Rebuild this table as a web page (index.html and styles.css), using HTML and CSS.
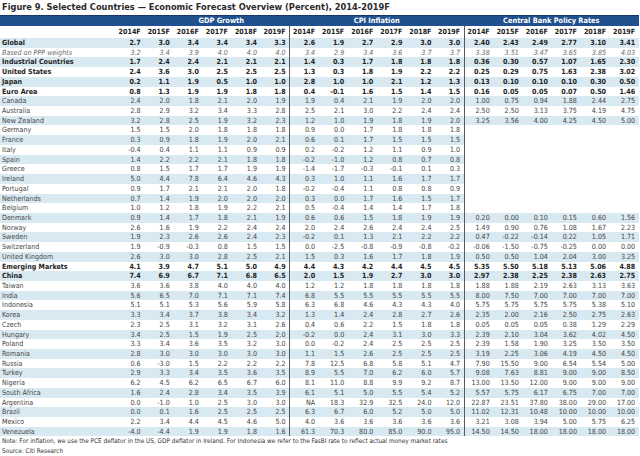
FILE: index.html
```html
<!DOCTYPE html>
<html>
<head>
<meta charset="utf-8">
<link rel="stylesheet" href="styles.css">
</head>
<body>
<div class="title">Figure 9. Selected Countries — Economic Forecast Overview (Percent), 2014-2019F</div>
<table class="fc">
<colgroup><col class="lab"><col span="18" class="num"></colgroup>
<thead>
<tr class="band"><th></th><th colspan="6" class="gdp">GDP Growth</th><th colspan="6">CPI Inflation</th><th colspan="6">Central Bank Policy Rates</th></tr>
<tr class="years"><th></th><td>2014F</td><td>2015F</td><td>2016F</td><td>2017F</td><td>2018F</td><td>2019F</td><td>2014F</td><td>2015F</td><td>2016F</td><td>2017F</td><td>2018F</td><td>2019F</td><td>2014F</td><td>2015F</td><td>2016F</td><td>2017F</td><td>2018F</td><td>2019F</td></tr>
</thead>
<tbody>
<tr class="s b"><th>Global</th><td>2.7</td><td>3.0</td><td>3.4</td><td>3.4</td><td>3.4</td><td>3.3</td><td>2.6</td><td>1.9</td><td>2.7</td><td>2.9</td><td>3.0</td><td>3.0</td><td>2.40</td><td>2.43</td><td>2.49</td><td>2.77</td><td>3.10</td><td>3.41</td></tr>
<tr class="i"><th>Based on PPP weights</th><td>3.2</td><td>3.4</td><td>3.9</td><td>4.0</td><td>4.0</td><td>4.0</td><td>3.4</td><td>2.9</td><td>3.4</td><td>3.6</td><td>3.7</td><td>3.7</td><td>3.38</td><td>3.51</td><td>3.47</td><td>3.65</td><td>3.85</td><td>4.03</td></tr>
<tr class="s b"><th>Industrial Countries</th><td>1.7</td><td>2.4</td><td>2.4</td><td>2.1</td><td>2.1</td><td>2.1</td><td>1.4</td><td>0.3</td><td>1.7</td><td>1.8</td><td>1.8</td><td>1.8</td><td>0.36</td><td>0.30</td><td>0.57</td><td>1.07</td><td>1.65</td><td>2.30</td></tr>
<tr class="b"><th>United States</th><td>2.4</td><td>3.6</td><td>3.0</td><td>2.5</td><td>2.5</td><td>2.5</td><td>1.3</td><td>0.3</td><td>1.8</td><td>1.9</td><td>2.2</td><td>2.2</td><td>0.25</td><td>0.29</td><td>0.75</td><td>1.63</td><td>2.38</td><td>3.02</td></tr>
<tr class="s b"><th>Japan</th><td>0.2</td><td>1.1</td><td>1.9</td><td>0.5</td><td>1.0</td><td>1.0</td><td>2.8</td><td>1.0</td><td>1.0</td><td>2.1</td><td>1.2</td><td>1.3</td><td>0.13</td><td>0.10</td><td>0.10</td><td>0.10</td><td>0.30</td><td>0.50</td></tr>
<tr class="b"><th>Euro Area</th><td>0.8</td><td>1.3</td><td>1.9</td><td>1.9</td><td>1.8</td><td>1.8</td><td>0.4</td><td>-0.1</td><td>1.6</td><td>1.5</td><td>1.4</td><td>1.5</td><td>0.16</td><td>0.05</td><td>0.05</td><td>0.07</td><td>0.50</td><td>1.46</td></tr>
<tr class="s"><th>Canada</th><td>2.4</td><td>2.0</td><td>1.8</td><td>2.1</td><td>2.0</td><td>1.9</td><td>1.9</td><td>0.4</td><td>2.1</td><td>1.9</td><td>2.0</td><td>2.0</td><td>1.00</td><td>0.75</td><td>0.94</td><td>1.88</td><td>2.44</td><td>2.75</td></tr>
<tr><th>Australia</th><td>2.8</td><td>2.9</td><td>3.2</td><td>3.4</td><td>3.3</td><td>2.8</td><td>2.5</td><td>2.1</td><td>3.0</td><td>2.2</td><td>2.4</td><td>2.4</td><td>2.50</td><td>2.50</td><td>3.13</td><td>3.75</td><td>4.19</td><td>4.75</td></tr>
<tr class="s"><th>New Zealand</th><td>3.2</td><td>2.8</td><td>2.5</td><td>1.9</td><td>3.2</td><td>2.3</td><td>1.2</td><td>1.0</td><td>1.9</td><td>1.8</td><td>1.9</td><td>2.0</td><td>3.25</td><td>3.56</td><td>4.00</td><td>4.25</td><td>4.50</td><td>5.00</td></tr>
<tr><th>Germany</th><td>1.5</td><td>1.5</td><td>2.0</td><td>1.8</td><td>1.8</td><td>1.8</td><td>0.9</td><td>0.0</td><td>1.7</td><td>1.8</td><td>1.8</td><td>1.8</td><td colspan="6" class="blank"></td></tr>
<tr class="s"><th>France</th><td>0.3</td><td>0.9</td><td>1.8</td><td>1.9</td><td>2.0</td><td>2.1</td><td>0.6</td><td>0.1</td><td>1.7</td><td>1.5</td><td>1.5</td><td>1.5</td><td colspan="6" class="blank"></td></tr>
<tr><th>Italy</th><td>-0.4</td><td>0.4</td><td>1.1</td><td>1.1</td><td>0.9</td><td>0.9</td><td>0.2</td><td>-0.2</td><td>1.2</td><td>1.1</td><td>0.9</td><td>1.0</td><td colspan="6" class="blank"></td></tr>
<tr class="s"><th>Spain</th><td>1.4</td><td>2.2</td><td>2.2</td><td>2.1</td><td>1.8</td><td>1.8</td><td>-0.2</td><td>-1.0</td><td>1.2</td><td>0.8</td><td>0.7</td><td>0.8</td><td colspan="6" class="blank"></td></tr>
<tr><th>Greece</th><td>0.8</td><td>1.5</td><td>1.7</td><td>1.7</td><td>1.9</td><td>1.9</td><td>-1.4</td><td>-1.7</td><td>-0.3</td><td>-0.1</td><td>0.1</td><td>0.3</td><td colspan="6" class="blank"></td></tr>
<tr class="s"><th>Ireland</th><td>5.0</td><td>4.4</td><td>7.8</td><td>6.4</td><td>4.6</td><td>4.3</td><td>0.3</td><td>1.0</td><td>1.1</td><td>1.6</td><td>1.7</td><td>1.7</td><td colspan="6" class="blank"></td></tr>
<tr><th>Portugal</th><td>0.9</td><td>1.7</td><td>2.1</td><td>2.1</td><td>2.0</td><td>1.8</td><td>-0.2</td><td>-0.4</td><td>1.1</td><td>0.8</td><td>0.8</td><td>0.9</td><td colspan="6" class="blank"></td></tr>
<tr class="s"><th>Netherlands</th><td>0.7</td><td>1.4</td><td>1.9</td><td>2.0</td><td>2.0</td><td>2.0</td><td>0.3</td><td>0.0</td><td>1.7</td><td>1.6</td><td>1.5</td><td>1.7</td><td colspan="6" class="blank"></td></tr>
<tr><th>Belgium</th><td>1.0</td><td>1.2</td><td>1.8</td><td>1.9</td><td>2.2</td><td>2.1</td><td>0.5</td><td>-0.4</td><td>1.4</td><td>1.4</td><td>1.7</td><td>1.8</td><td colspan="6" class="blank"></td></tr>
<tr class="s"><th>Denmark</th><td>0.9</td><td>1.4</td><td>1.7</td><td>1.8</td><td>2.1</td><td>1.9</td><td>0.6</td><td>0.6</td><td>1.5</td><td>1.8</td><td>1.9</td><td>1.9</td><td>0.20</td><td>0.00</td><td>0.10</td><td>0.15</td><td>0.60</td><td>1.56</td></tr>
<tr><th>Norway</th><td>2.6</td><td>1.6</td><td>1.9</td><td>2.2</td><td>2.4</td><td>2.4</td><td>2.0</td><td>2.4</td><td>2.6</td><td>2.4</td><td>2.4</td><td>2.5</td><td>1.49</td><td>0.90</td><td>0.76</td><td>1.08</td><td>1.67</td><td>2.23</td></tr>
<tr class="s"><th>Sweden</th><td>1.9</td><td>2.3</td><td>2.6</td><td>2.6</td><td>2.4</td><td>2.3</td><td>-0.2</td><td>0.1</td><td>1.3</td><td>2.1</td><td>2.2</td><td>2.2</td><td>0.47</td><td>-0.22</td><td>-0.14</td><td>0.22</td><td>1.05</td><td>1.71</td></tr>
<tr><th>Switzerland</th><td>1.9</td><td>-0.9</td><td>-0.3</td><td>0.8</td><td>1.5</td><td>1.5</td><td>0.0</td><td>-2.5</td><td>-0.8</td><td>-0.9</td><td>-0.8</td><td>-0.2</td><td>-0.06</td><td>-1.50</td><td>-0.75</td><td>-0.25</td><td>0.00</td><td>0.00</td></tr>
<tr class="s"><th>United Kingdom</th><td>2.6</td><td>3.0</td><td>3.0</td><td>2.8</td><td>2.5</td><td>2.1</td><td>1.5</td><td>0.3</td><td>1.6</td><td>1.7</td><td>1.8</td><td>1.9</td><td>0.50</td><td>0.50</td><td>1.04</td><td>2.04</td><td>3.00</td><td>3.25</td></tr>
<tr class="b"><th>Emerging Markets</th><td>4.1</td><td>3.9</td><td>4.7</td><td>5.1</td><td>5.0</td><td>4.9</td><td>4.4</td><td>4.3</td><td>4.2</td><td>4.4</td><td>4.5</td><td>4.5</td><td>5.35</td><td>5.50</td><td>5.18</td><td>5.13</td><td>5.06</td><td>4.88</td></tr>
<tr class="s b"><th>China</th><td>7.4</td><td>6.9</td><td>6.7</td><td>7.1</td><td>6.8</td><td>6.5</td><td>2.0</td><td>1.5</td><td>1.9</td><td>2.7</td><td>3.0</td><td>3.0</td><td>2.97</td><td>2.38</td><td>2.25</td><td>2.38</td><td>2.63</td><td>2.75</td></tr>
<tr><th>Taiwan</th><td>3.6</td><td>3.6</td><td>3.8</td><td>4.0</td><td>4.0</td><td>4.0</td><td>1.2</td><td>1.2</td><td>1.8</td><td>1.8</td><td>1.8</td><td>1.8</td><td>1.88</td><td>1.88</td><td>2.19</td><td>2.63</td><td>3.13</td><td>3.63</td></tr>
<tr class="s"><th>India</th><td>5.6</td><td>6.5</td><td>7.0</td><td>7.1</td><td>7.1</td><td>7.4</td><td>6.8</td><td>5.5</td><td>5.5</td><td>5.5</td><td>5.5</td><td>5.5</td><td>8.00</td><td>7.50</td><td>7.00</td><td>7.00</td><td>7.00</td><td>7.00</td></tr>
<tr><th>Indonesia</th><td>5.1</td><td>5.1</td><td>5.3</td><td>5.6</td><td>5.9</td><td>5.8</td><td>6.3</td><td>6.8</td><td>4.6</td><td>4.3</td><td>4.3</td><td>4.0</td><td>5.75</td><td>5.75</td><td>5.75</td><td>5.75</td><td>5.38</td><td>5.10</td></tr>
<tr class="s"><th>Korea</th><td>3.3</td><td>3.4</td><td>3.7</td><td>3.8</td><td>3.4</td><td>3.2</td><td>1.3</td><td>1.4</td><td>2.4</td><td>2.8</td><td>2.7</td><td>2.6</td><td>2.35</td><td>2.00</td><td>2.16</td><td>2.50</td><td>2.75</td><td>2.63</td></tr>
<tr><th>Czech</th><td>2.3</td><td>2.5</td><td>3.1</td><td>3.2</td><td>3.1</td><td>2.6</td><td>0.4</td><td>0.6</td><td>2.2</td><td>1.5</td><td>1.8</td><td>1.8</td><td>0.05</td><td>0.05</td><td>0.05</td><td>0.38</td><td>1.29</td><td>2.29</td></tr>
<tr class="s"><th>Hungary</th><td>3.4</td><td>2.5</td><td>1.5</td><td>1.9</td><td>2.5</td><td>2.0</td><td>-0.2</td><td>0.0</td><td>2.4</td><td>3.1</td><td>3.0</td><td>3.3</td><td>2.39</td><td>2.10</td><td>3.04</td><td>3.62</td><td>4.02</td><td>4.50</td></tr>
<tr><th>Poland</th><td>3.3</td><td>3.4</td><td>3.6</td><td>3.5</td><td>3.2</td><td>3.0</td><td>0.0</td><td>-0.2</td><td>2.4</td><td>2.5</td><td>2.5</td><td>2.5</td><td>2.39</td><td>1.58</td><td>1.90</td><td>3.25</td><td>3.50</td><td>3.50</td></tr>
<tr class="s"><th>Romania</th><td>2.8</td><td>3.0</td><td>3.0</td><td>3.0</td><td>3.0</td><td>3.0</td><td>1.1</td><td>1.5</td><td>2.6</td><td>2.5</td><td>2.5</td><td>2.5</td><td>3.19</td><td>2.25</td><td>3.06</td><td>4.19</td><td>4.50</td><td>4.50</td></tr>
<tr><th>Russia</th><td>0.6</td><td>-3.0</td><td>1.5</td><td>2.2</td><td>2.2</td><td>2.2</td><td>7.8</td><td>12.5</td><td>6.8</td><td>5.8</td><td>5.1</td><td>4.7</td><td>7.90</td><td>15.50</td><td>9.00</td><td>6.54</td><td>5.54</td><td>5.00</td></tr>
<tr class="s"><th>Turkey</th><td>2.9</td><td>3.3</td><td>3.4</td><td>3.5</td><td>3.6</td><td>3.5</td><td>8.9</td><td>5.5</td><td>7.0</td><td>6.2</td><td>6.0</td><td>5.7</td><td>9.08</td><td>7.63</td><td>8.81</td><td>9.00</td><td>9.00</td><td>8.50</td></tr>
<tr><th>Nigeria</th><td>6.2</td><td>4.5</td><td>6.2</td><td>6.5</td><td>6.7</td><td>6.0</td><td>8.1</td><td>11.0</td><td>8.8</td><td>9.9</td><td>9.2</td><td>8.7</td><td>13.00</td><td>13.50</td><td>12.00</td><td>9.00</td><td>9.00</td><td>9.00</td></tr>
<tr class="s"><th>South Africa</th><td>1.6</td><td>2.4</td><td>2.8</td><td>3.4</td><td>3.5</td><td>3.9</td><td>6.1</td><td>5.1</td><td>5.0</td><td>5.5</td><td>5.4</td><td>5.2</td><td>5.57</td><td>5.75</td><td>6.17</td><td>6.75</td><td>7.00</td><td>7.00</td></tr>
<tr><th>Argentina</th><td>0.0</td><td>-1.0</td><td>1.0</td><td>2.5</td><td>3.0</td><td>3.0</td><td>NA</td><td>18.3</td><td>32.9</td><td>32.5</td><td>24.0</td><td>12.0</td><td>22.87</td><td>23.51</td><td>37.80</td><td>38.00</td><td>29.00</td><td>17.00</td></tr>
<tr class="s"><th>Brazil</th><td>0.0</td><td>0.1</td><td>1.6</td><td>2.5</td><td>2.5</td><td>2.5</td><td>6.3</td><td>6.7</td><td>6.0</td><td>5.2</td><td>5.0</td><td>5.0</td><td>11.02</td><td>12.31</td><td>10.48</td><td>10.00</td><td>10.00</td><td>10.00</td></tr>
<tr><th>Mexico</th><td>2.2</td><td>3.4</td><td>4.4</td><td>4.5</td><td>4.6</td><td>5.0</td><td>4.0</td><td>3.6</td><td>3.6</td><td>3.6</td><td>3.6</td><td>3.6</td><td>3.21</td><td>3.08</td><td>3.94</td><td>5.00</td><td>5.75</td><td>6.25</td></tr>
<tr class="s"><th>Venezuela</th><td>-4.0</td><td>-4.4</td><td>1.9</td><td>1.9</td><td>1.8</td><td>1.6</td><td>61.3</td><td>70.3</td><td>80.0</td><td>85.0</td><td>90.0</td><td>95.0</td><td>14.50</td><td>14.50</td><td>18.00</td><td>18.00</td><td>18.00</td><td>18.00</td></tr>
</tbody>
</table>
<div class="notes">
<p>Note: For inflation, we use the PCE deflator in the US, GDP deflator in Ireland. For Indonesia we refer to the FasBI rate to reflect actual money market rates</p>
<p>Source: Citi Research</p>
</div>
</body>
</html>
```

FILE: styles.css
```css
html, body {
  margin: 0;
  padding: 0;
  background: #ffffff;
}
body {
  width: 640px;
  height: 456px;
  overflow: hidden;
  font-family: "Liberation Sans Narrow", "DejaVu Sans Condensed", "Liberation Sans", Arial, sans-serif;
  color: #333;
}
.title {
  height: 15px;
  line-height: 14px;
  padding-left: 2px;
  font-size: 9.2px;
  font-weight: bold;
  color: #2a2a2a;
  white-space: nowrap;
}
.fc {
  border-collapse: collapse;
  table-layout: fixed;
  width: 638.4px;
  font-size: 7.1px;
}
.fc col.lab { width: 115px; }
.fc col.num { width: 29.08px; }
.fc th, .fc td {
  padding: 0;
  white-space: nowrap;
  overflow: visible;
}
.fc tbody th {
  text-align: left;
  font-weight: normal;
  padding-left: 2px;
  color: #444;
}
.fc tbody td,
.fc .years td {
  text-align: right;
  padding-right: 3.4px;
}
.fc tbody tr {
  height: 9.725px;
  line-height: 9.7px;
}
.fc tbody td { color: #444; }
.fc td:nth-child(8),
.fc td:nth-child(14) {
  border-left: 1px solid #5a5a5a;
}
.fc .band th {
  height: 10px;
  line-height: 10px;
  background: #21508e;
  color: #ffffff;
  font-weight: bold;
  font-size: 7.4px;
  text-align: center;
  border-top: 1px solid #16396a;
}
.fc .band th.gdp { padding-left: 38px; }
.fc .years td {
  height: 11px;
  line-height: 12px;
  font-weight: bold;
  color: #222;
}
.fc tr.s > * { background: #d9e9f2; }
.fc tr.s > td.blank { background: #ffffff; }
.fc tr.b > th, .fc tr.b > td {
  font-weight: bold;
  color: #1e1e1e;
}
.fc tr.i > th, .fc tr.i > td {
  font-style: italic;
  color: #6a6a6a;
}
.notes {
  padding: 1px 0 0 2px;
  font-size: 6.4px;
  color: #333;
}
.notes p {
  margin: 0;
  line-height: 9.4px;
  white-space: nowrap;
}
```
